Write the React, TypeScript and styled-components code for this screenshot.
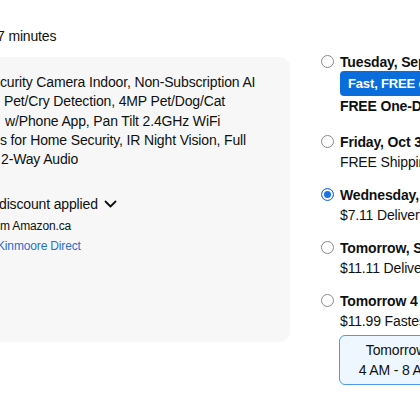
import React from 'react';
import styled, { createGlobalStyle } from 'styled-components';

const GlobalStyle = createGlobalStyle`
    html, body {
        margin: 0;
        padding: 0;
        background: #ffffff;
        overflow: hidden;
    }
    body {
        font-family: "Liberation Sans", Arial, sans-serif;
        color: #0f1111;
        width: 420px;
        height: 420px;
        letter-spacing: -0.15px;
    }
`;

const Page = styled.div`
    display: flex;
    flex-direction: row;
    width: 420px;
    height: 420px;
    overflow: hidden;
`;

const LeftColumn = styled.div`
    flex: 0 0 290px;
    display: flex;
    flex-direction: column;
`;

const Eta = styled.div`
    font-size: 14px;
    line-height: 20px;
    padding-top: 26px;
    margin-left: -3px;
    height: 31px;
`;

const ItemPanel = styled.div`
    background: #f7f7f7;
    border-radius: 0 10px 10px 0;
    height: 285px;
    padding-top: 16px;
    box-sizing: border-box;
`;

const Title = styled.div`
    font-size: 14px;
    line-height: 19.25px;
`;

const TitleLine = styled.div<{ $indent: number }>`
    white-space: nowrap;
    margin-left: ${p => p.$indent}px;
`;

const Discount = styled.div`
    margin-top: 25px;
    font-size: 14px;
    line-height: 20px;
    display: flex;
    align-items: center;
    gap: 6px;
    margin-left: -1px;
`;

const SmallLine = styled.div<{ $link?: boolean; $indent: number }>`
    font-size: 12px;
    line-height: 20px;
    margin-left: ${p => p.$indent}px;
    margin-top: ${p => (p.$link ? 0 : 2)}px;
    color: ${p => (p.$link ? '#2a6fd6' : '#0f1111')};
    white-space: nowrap;
`;

const RightColumn = styled.div`
    flex: 1 1 auto;
    padding-left: 31px;
    padding-top: 52px;
    display: flex;
    flex-direction: column;
    gap: 13px;
    min-width: 0;
`;

const Option = styled.div<{ $extra?: number }>`
    display: flex;
    flex-direction: row;
    gap: 6px;
    white-space: nowrap;
    margin-bottom: ${p => p.$extra ?? 0}px;
`;

const Radio = styled.span<{ $checked?: boolean }>`
    flex: 0 0 auto;
    width: 13px;
    height: 13px;
    margin-top: 3px;
    border-radius: 50%;
    box-sizing: border-box;
    border: 1px solid ${p => (p.$checked ? '#1a73e8' : '#8a8a8a')};
    background: ${p => (p.$checked ? '#1a73e8' : '#ffffff')};
    box-shadow: ${p => (p.$checked ? 'inset 0 0 0 2px #ffffff' : 'none')};
`;

const OptionBody = styled.div`
    display: flex;
    flex-direction: column;
    min-width: 0;
`;

const OptionTitle = styled.div`
    font-size: 14px;
    font-weight: 700;
    line-height: 20px;
`;

const OptionSub = styled.div<{ $bold?: boolean }>`
    font-size: 14px;
    line-height: 20px;
    font-weight: ${p => (p.$bold ? 700 : 400)};
    color: #0f1111;
`;

const Badge = styled.div`
    margin-top: -1px;
    margin-bottom: 0;
    background: #0a6ddb;
    color: #ffffff;
    font-size: 13px;
    font-weight: 700;
    line-height: 25px;
    padding-left: 8px;
    border-radius: 4px;
    width: 120px;
`;

const TimeSlotRow = styled.div`
    margin-top: -9px;
    padding-left: 18px;
`;

const TimeSlot = styled.div`
    width: 112px;
    border: 1px solid #4d9be8;
    border-radius: 6px;
    background: #eef7ff;
    padding: 4px 0;
    text-align: center;
    font-size: 14px;
    line-height: 20px;
    color: #0f1111;
    white-space: nowrap;
`;

const Chevron: React.FC = () => (
    <svg width="13" height="9" viewBox="0 0 13 9">
        <path d="M1.5 1.5 L6.5 6.5 L11.5 1.5" fill="none" stroke="#0f1111" strokeWidth="1.8" strokeLinecap="round" strokeLinejoin="round" />
    </svg>
);

const titleLines: [string, number][] = [
    ['curity Camera Indoor, Non-Subscription AI', 0],
    ['Pet/Cry Detection, 4MP Pet/Dog/Cat', 4],
    ['w/Phone App, Pan Tilt 2.4GHz WiFi', 5],
    ['s for Home Security, IR Night Vision, Full', 0],
    ['2-Way Audio', 1],
];

const DeliveryOption: React.FC<{ title: string; sub: string; checked?: boolean; bold?: boolean; extra?: number; children?: React.ReactNode }> = ({ title, sub, checked, bold, extra, children }) => (
    <Option $extra={extra}>
        <Radio $checked={checked} />
        <OptionBody>
            <OptionTitle>{title}</OptionTitle>
            {children}
            <OptionSub $bold={bold}>{sub}</OptionSub>
        </OptionBody>
    </Option>
);

const App: React.FC = () => {
    return (
        <Page>
            <GlobalStyle />
            <LeftColumn>
                <Eta>7 minutes</Eta>
                <ItemPanel>
                    <Title>
                        {titleLines.map(([text, indent]) => (
                            <TitleLine key={text} $indent={indent}>{text}</TitleLine>
                        ))}
                    </Title>
                    <Discount>discount applied <Chevron /></Discount>
                    <SmallLine $indent={0}>m Amazon.ca</SmallLine>
                    <SmallLine $link $indent={-3}>Kinmoore Direct</SmallLine>
                </ItemPanel>
            </LeftColumn>
            <RightColumn>
                <DeliveryOption title="Tuesday, September 30" sub="FREE One-Day Delivery" bold extra={3}>
                    <Badge>Fast, FREE delivery</Badge>
                </DeliveryOption>
                <DeliveryOption title="Friday, Oct 3" sub="FREE Shipping" />
                <DeliveryOption title="Wednesday, Oct 1" sub="$7.11 Delivery" checked />
                <DeliveryOption title="Tomorrow, Sep 27" sub="$11.11 Delivery" />
                <DeliveryOption title="Tomorrow 4 am - 8 am" sub="$11.99 Fastest Delivery" />
                <TimeSlotRow>
                    <TimeSlot>
                        Tomorrow<br />4 AM - 8 AM
                    </TimeSlot>
                </TimeSlotRow>
            </RightColumn>
        </Page>
    );
};

export default App;
